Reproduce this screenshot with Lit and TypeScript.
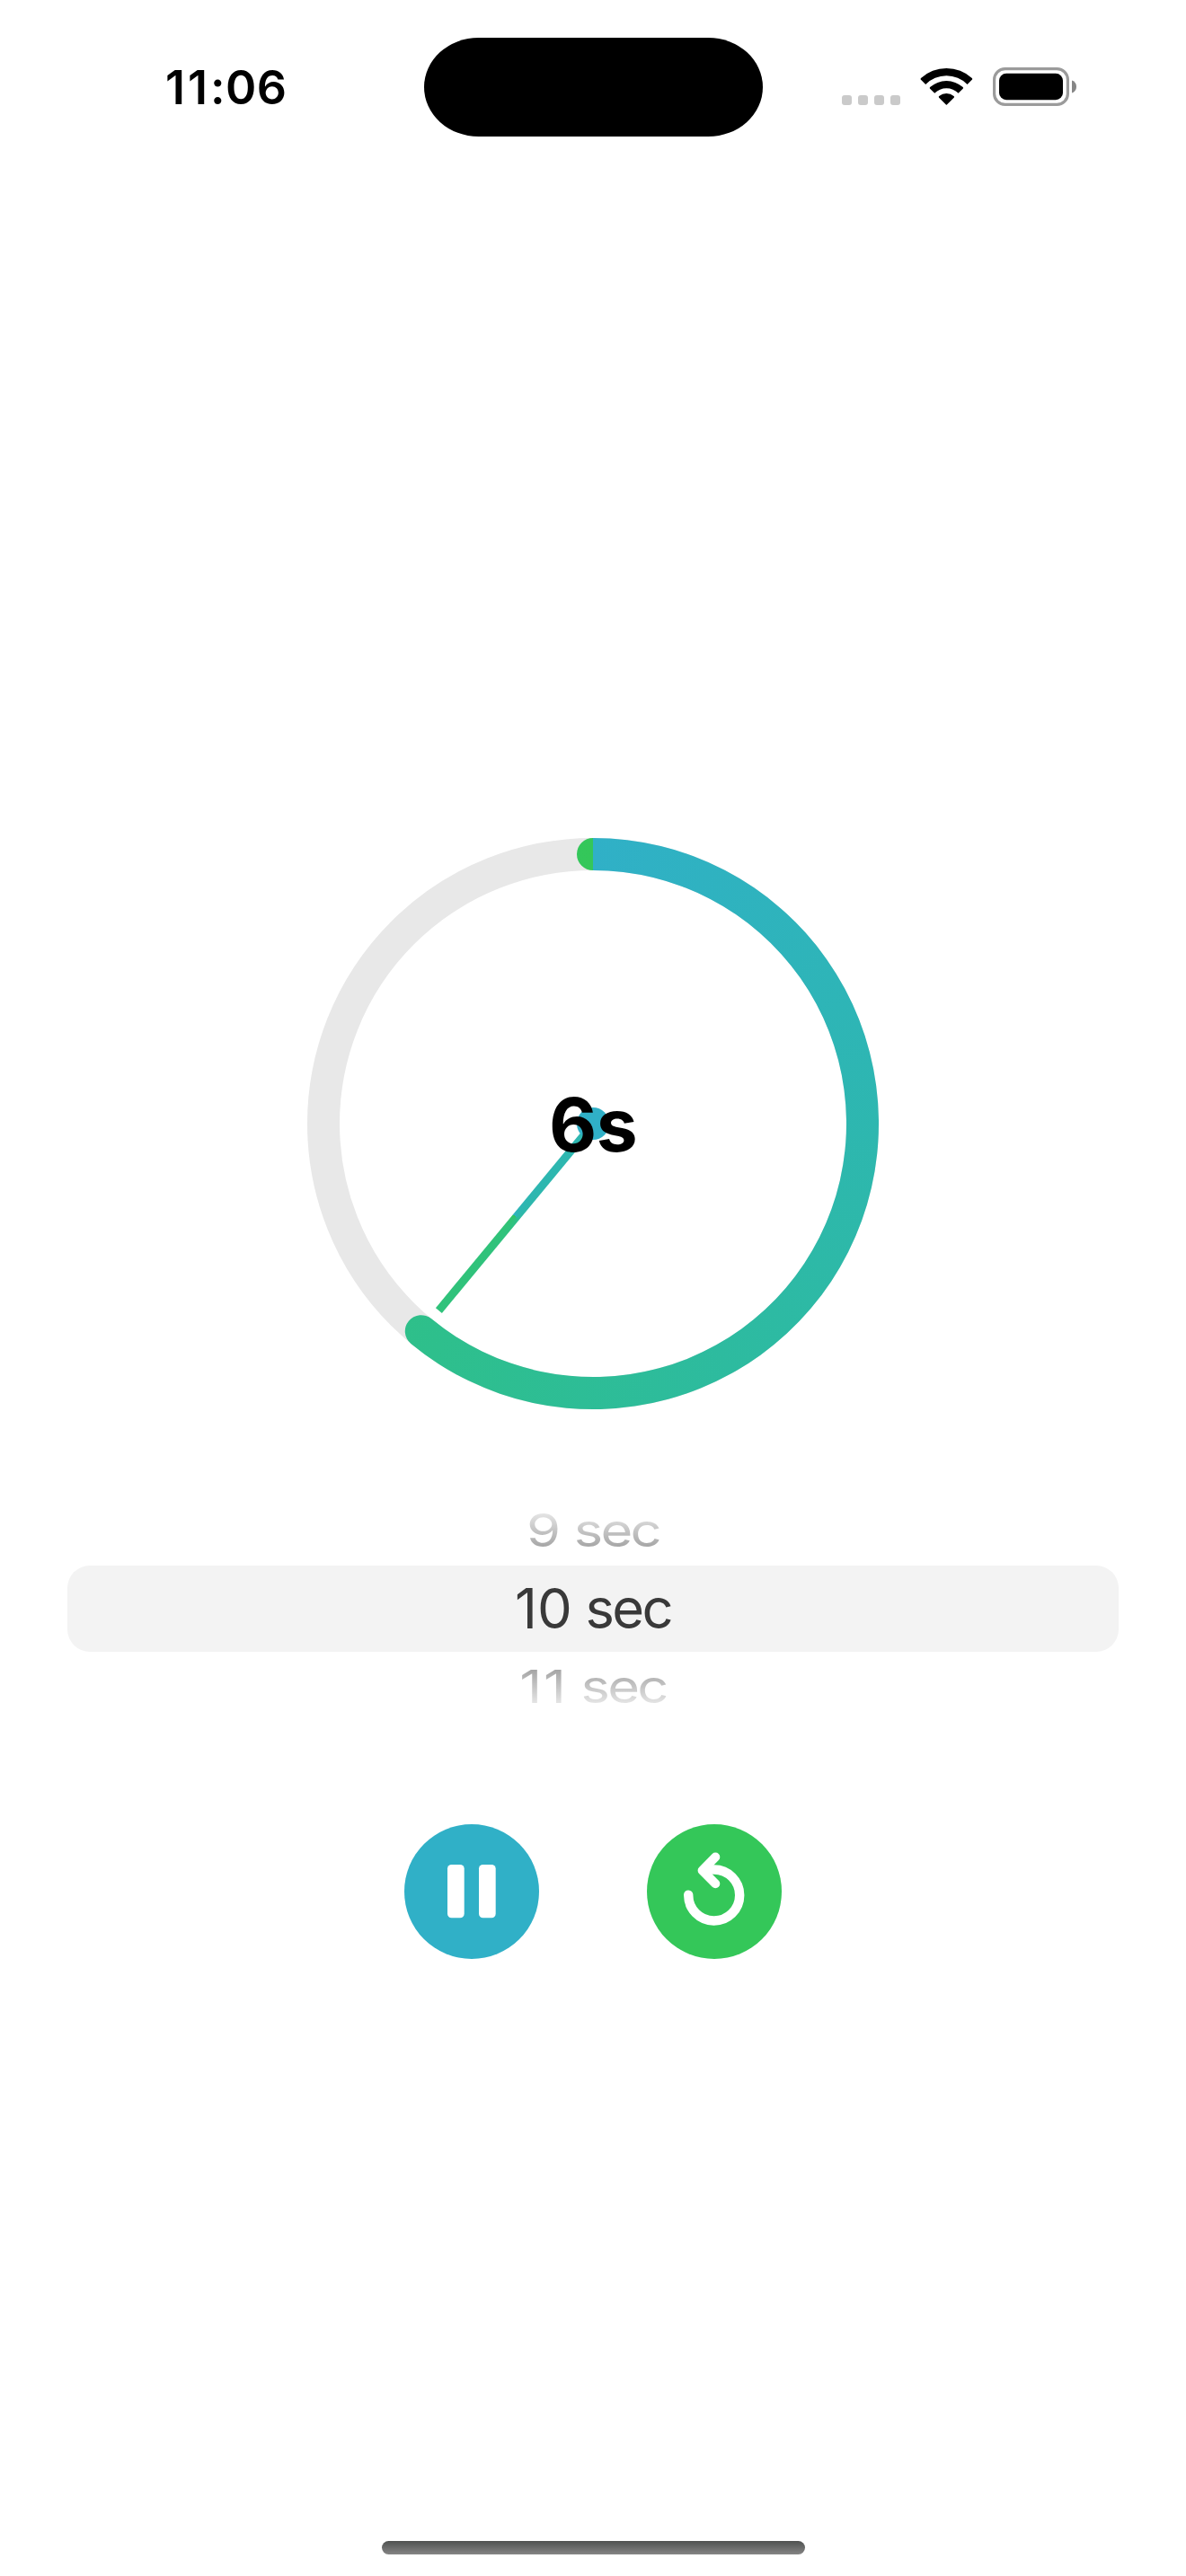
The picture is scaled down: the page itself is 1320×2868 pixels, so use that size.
import { LitElement, html, css, svg } from "lit";
import { customElement, property } from "lit/decorators.js";

/** Status bar with clock, sensor island and device indicators. */
@customElement("status-bar")
class StatusBar extends LitElement {
  @property() hour = "11";
  @property() minute = "06";

  static styles = css`
    :host {
      display: grid;
      grid-template-columns: 471.5px 377px 1fr;
      height: 152px;
      align-items: start;
    }
    .time {
      padding: 66px 0 0 184px;
      font-size: 52px;
      line-height: 64px;
      font-weight: 600;
      white-space: nowrap;
    }
    .hour {
      letter-spacing: 3px;
    }
    .minute {
      letter-spacing: 0.4px;
    }
    .island {
      margin-top: 41.6px;
      height: 110.6px;
      border-radius: 61px / 55.3px;
      background: #000;
    }
    .icons {
      display: flex;
      align-items: flex-start;
      padding: 75px 0 0 88.5px;
    }
    .dots {
      display: flex;
      gap: 7px;
      margin-top: 31px;
    }
    .dot {
      width: 11px;
      height: 11px;
      border-radius: 3px;
      background: #cacaca;
    }
    .wifi {
      margin-left: 22px;
    }
    .battery {
      margin-left: 21px;
    }
    svg {
      display: block;
    }
  `;

  render() {
    return html`
      <div class="time"><span class="hour">${this.hour}</span><span class="minute">:${this.minute}</span></div>
      <div class="island"></div>
      <div class="icons">
        <div class="dots">${[0, 1, 2, 3].map(() => html`<span class="dot"></span>`)}</div>
        <svg class="wifi" width="60" height="43" viewBox="0 0 60 43">
          <g transform="translate(29.4 42)">
            <path d="M-28.4 -29.9 A41.7 41.7 0 0 1 28.4 -29.9 Q29.2 -29.1 28.4 -28.3 L23.2 -23.1 A32.7 32.7 0 0 0 -23.2 -23.1 L-28.4 -28.3 Q-29.2 -29.1 -28.4 -29.9Z" />
            <path d="M-18.3 -19.9 A27.3 27.3 0 0 1 18.3 -19.9 Q19.2 -19 18.3 -18.2 L13.2 -13.2 A18.7 18.7 0 0 0 -13.2 -13.2 L-18.3 -18.2 Q-19.2 -19 -18.3 -19.9Z" />
            <path d="M-8.2 -10 A13 13 0 0 1 8.2 -10 Q9.1 -9.2 8.3 -8.3 L0.5 -0.5 Q0 0 -0.5 -0.5 L-8.3 -8.3 Q-9.1 -9.2 -8.2 -10Z" />
          </g>
        </svg>
        <svg class="battery" width="94" height="43" viewBox="0 0 94 43">
          <rect x="1.6" y="1.6" width="81.8" height="39.8" rx="12" fill="none" stroke="#9b9b9b" stroke-width="3.2" />
          <rect x="7" y="6.8" width="71" height="29.4" rx="8" />
          <path d="M88 14.6 Q93 16.4 93 21.6 Q93 26.8 88 28.6Z" fill="#868686" />
        </svg>
      </div>
    `;
  }
}

/** Circular countdown: track, gradient arc, hand and remaining seconds. */
@customElement("timer-dial")
class TimerDial extends LitElement {
  @property({ type: Number }) progress = 0.61;
  @property() label = "6s";

  static styles = css`
    :host {
      display: grid;
      width: 636px;
      height: 636px;
      place-items: center;
    }
    :host > * {
      grid-area: 1 / 1;
    }
    .track {
      box-sizing: border-box;
      width: 636px;
      height: 636px;
      border: 36px solid #e8e8e8;
      border-radius: 50%;
    }
    .arc {
      width: 636px;
      height: 636px;
      background: conic-gradient(in oklab, #30b0c7, #34c759);
    }
    .arm {
      width: 9px;
      height: 540px;
    }
    .hand {
      width: 9px;
      height: 270px;
      background: conic-gradient(from 90deg in oklab, #30b0c7, #34c759);
    }
    .hub {
      z-index: 1;
      width: 36px;
      height: 36px;
      border-radius: 50%;
      background: #30b0c7;
    }
    .label {
      z-index: 2;
      font-size: 82px;
      line-height: 100px;
      font-weight: 700;
      letter-spacing: -0.6px;
      padding-top: 4px;
    }
  `;

  /** Outline of a round-capped arc starting at twelve o'clock. */
  private arcOutline(): string {
    const c = 318;
    const inner = 282;
    const a = this.progress * 2 * Math.PI;
    const at = (r: number) =>
      `${(c + r * Math.sin(a)).toFixed(2)} ${(c - r * Math.cos(a)).toFixed(2)}`;
    const large = this.progress > 0.5 ? 1 : 0;
    return (
      `M${c} 0 A${c} ${c} 0 ${large} 1 ${at(c)} A18 18 0 0 1 ${at(inner)} ` +
      `A${inner} ${inner} 0 ${large} 0 ${c} 36 A18 18 0 0 1 ${c} 0Z`
    );
  }

  render() {
    return html`
      <div class="track"></div>
      <div class="arc" style="clip-path: path('${this.arcOutline()}')"></div>
      <div class="arm" style="transform: rotate(${this.progress * 360}deg)">
        <div class="hand"></div>
      </div>
      <div class="hub"></div>
      <div class="label">${this.label}</div>
    `;
  }
}

/** Wheel picker showing the chosen duration and its neighbours. */
@customElement("duration-wheel")
class DurationWheel extends LitElement {
  @property({ type: Number }) value = 10;

  static styles = css`
    :host {
      display: grid;
      grid-template-rows: 72px 96px 72px;
      margin: 0 75px;
      text-align: center;
      font-size: 61.5px;
      white-space: nowrap;
    }
    .unit {
      letter-spacing: -2.7px;
    }
    .selected {
      border-radius: 25px;
      background: #f3f3f3;
      color: #393939;
      line-height: 96px;
    }
    .side {
      line-height: 72px;
      color: transparent;
      -webkit-background-clip: text;
      background-clip: text;
    }
    .before {
      transform: translateY(-3px) scaleY(0.835);
      background-image: linear-gradient(#ebebeb 12%, #a2a2a2 84%);
    }
    .after {
      transform: translateY(2.5px) scaleY(0.835);
      background-image: linear-gradient(#a2a2a2 16%, #ebebeb 88%);
    }
    .after .number {
      letter-spacing: 1.8px;
    }
  `;

  private row(kind: string, n: number) {
    return html`<div class=${kind}><span class="number">${n}</span><span class="unit"> sec</span></div>`;
  }

  render() {
    return html`
      ${this.row("side before", this.value - 1)}
      ${this.row("selected", this.value)}
      ${this.row("side after", this.value + 1)}
    `;
  }
}

const pauseIcon = svg`
  <rect x="48" y="45" width="18.7" height="59.3" rx="4.5" />
  <rect x="83" y="45" width="18.7" height="59.3" rx="4.5" />`;

const resetIcon = svg`
  <g fill="none" stroke="#fff" stroke-width="10.4" stroke-linecap="round" stroke-linejoin="round">
    <path d="M46.2 78.6 A28.5 28.5 0 1 0 74.7 50.5 H66" />
    <path d="M76.3 36.6 L61.6 51.4 L76.3 66.2" stroke-width="10" />
  </g>`;

@customElement("app-root")
class AppRoot extends LitElement {
  static styles = css`
    :host {
      display: flex;
      flex-direction: column;
      width: 1320px;
      height: 2868px;
      overflow: hidden;
      background: #fff;
      color: #000;
      font-family: Inter, "Liberation Sans", sans-serif;
    }
    main {
      flex: 1;
      display: flex;
      flex-direction: column;
      align-items: center;
      padding-top: 781px;
    }
    duration-wheel {
      align-self: stretch;
      margin-top: 102px;
    }
    .controls {
      display: flex;
      gap: 120px;
      margin-top: 120px;
    }
    button {
      width: 150px;
      height: 150px;
      padding: 0;
      border: 0;
      border-radius: 50%;
    }
    button svg {
      display: block;
      fill: #fff;
    }
    .pause {
      background: #30b0c7;
    }
    .reset {
      background: #34c759;
    }
    .home {
      align-self: center;
      width: 471px;
      height: 15px;
      margin: 0 0 24px 1px;
      border-radius: 8px;
      background: linear-gradient(#4f5150, #858585);
    }
  `;

  render() {
    return html`
      <status-bar></status-bar>
      <main>
        <timer-dial></timer-dial>
        <duration-wheel></duration-wheel>
        <div class="controls">
          <button class="pause" aria-label="Pause">
            <svg width="150" height="150" viewBox="0 0 150 150">${pauseIcon}</svg>
          </button>
          <button class="reset" aria-label="Reset">
            <svg width="150" height="150" viewBox="0 0 150 150">${resetIcon}</svg>
          </button>
        </div>
      </main>
      <div class="home"></div>
    `;
  }
}
